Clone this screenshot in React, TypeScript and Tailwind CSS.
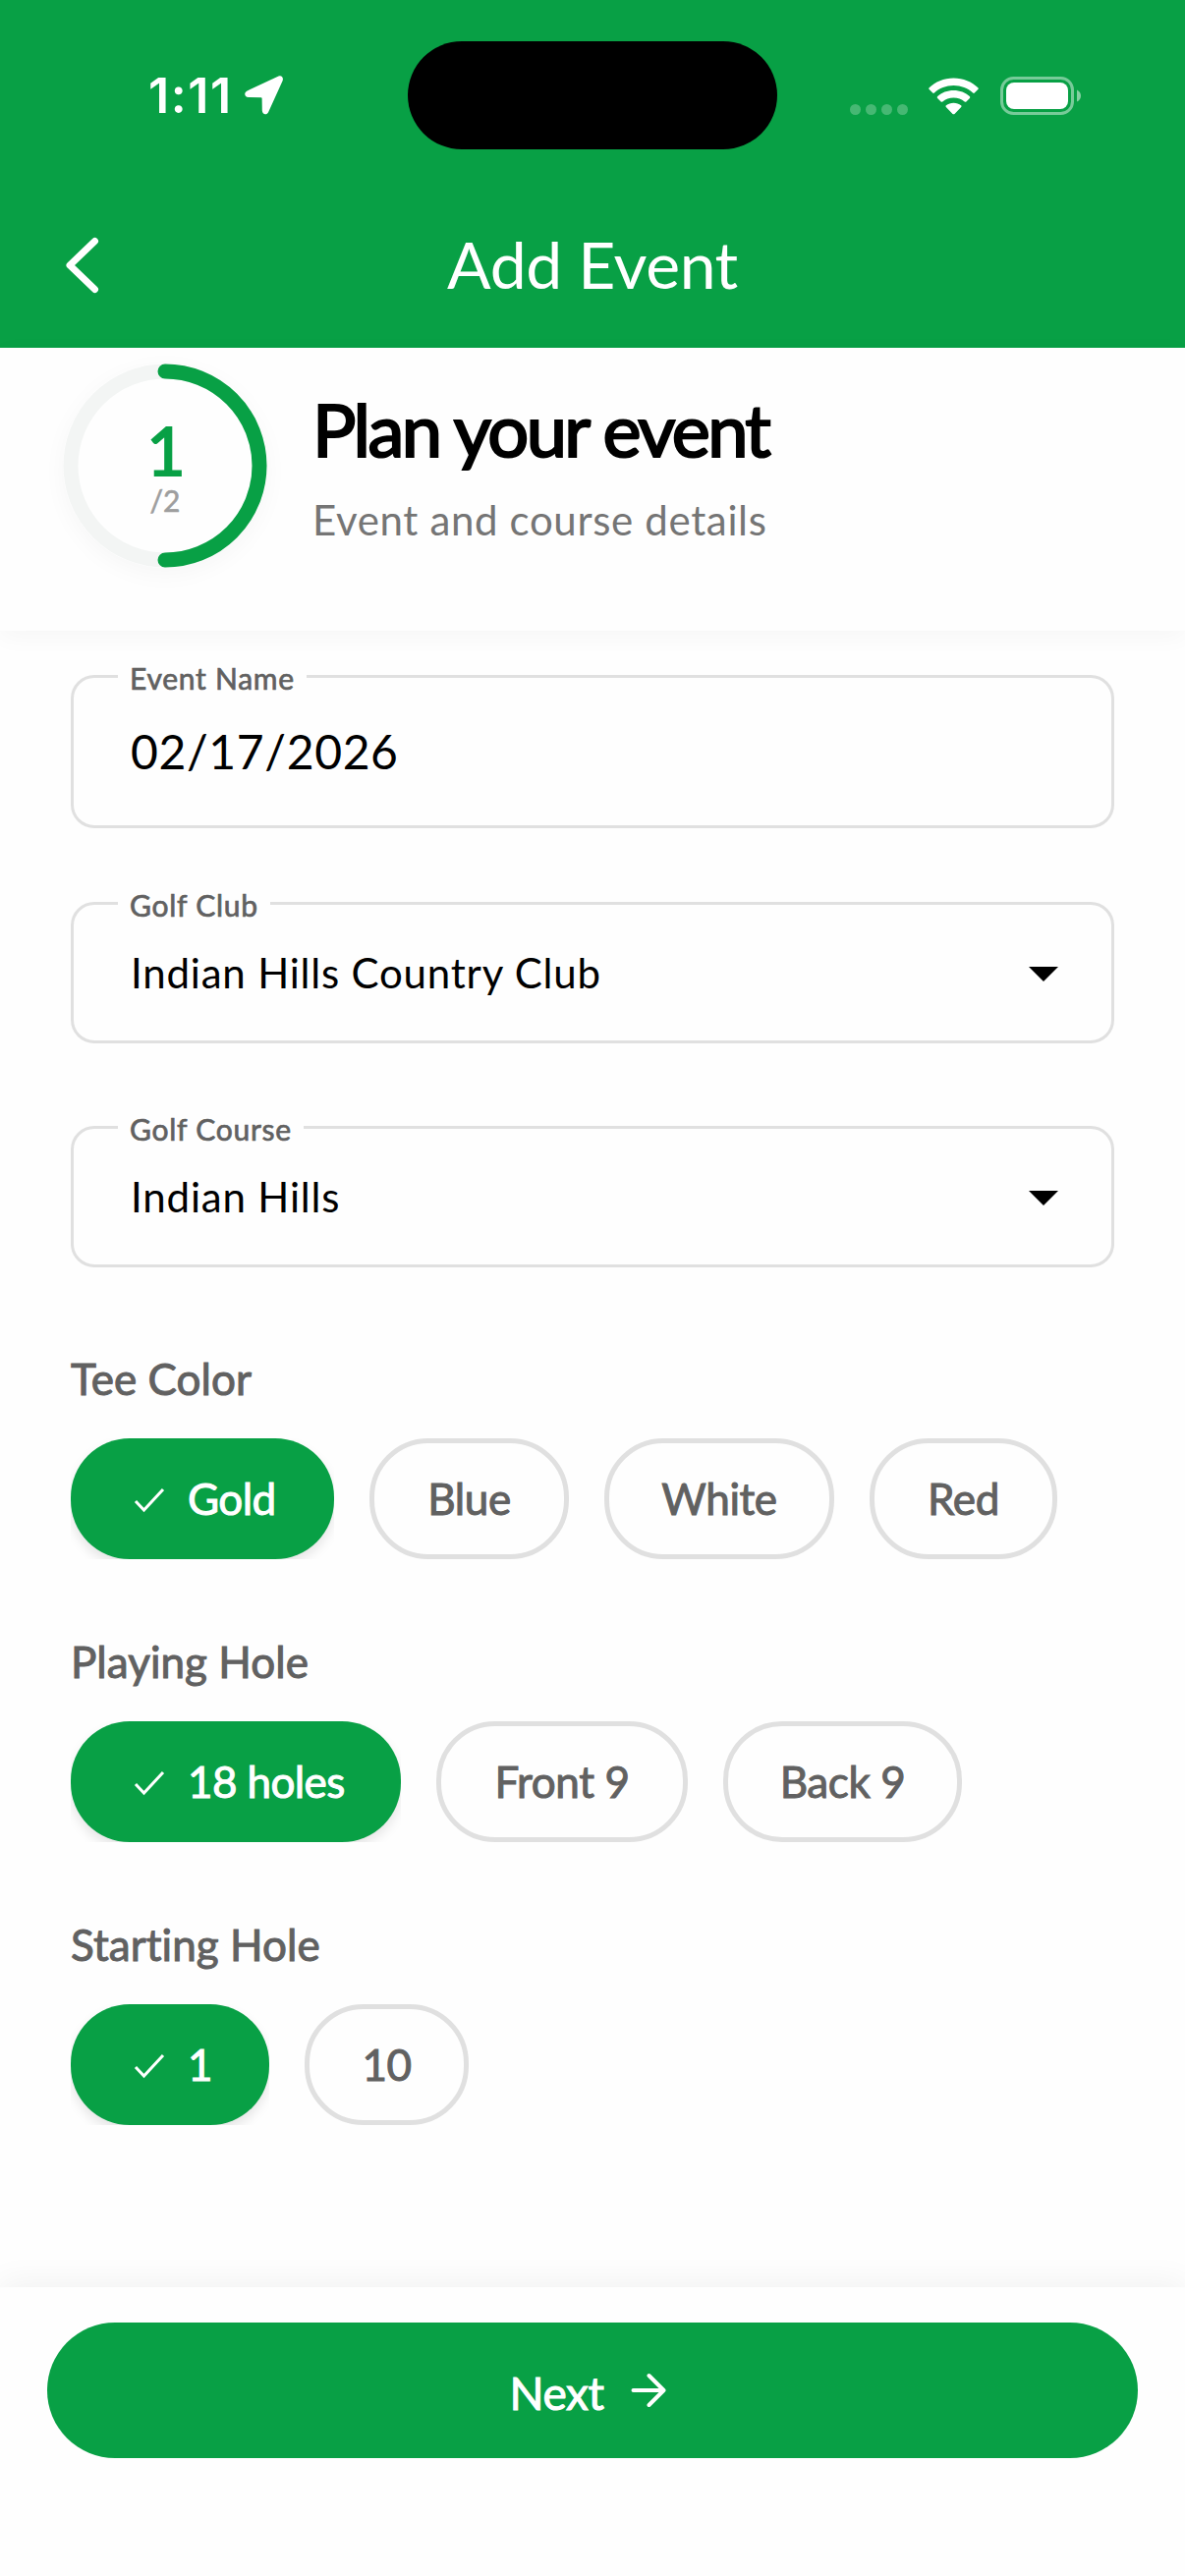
import React from 'react';

interface FieldProps {
  label: string;
  value: string;
  className: string;
  valueClass: string;
  dropdown?: boolean;
}

interface Chip {
  label: string;
  width: string;
}

interface ChipGroupProps {
  title: string;
  chips: Chip[];
}

const groups: ChipGroupProps[] = [
  {
    title: 'Tee Color',
    chips: [
      { label: 'Gold', width: 'w-[268px]' },
      { label: 'Blue', width: 'w-[203px]' },
      { label: 'White', width: 'w-[234px]' },
      { label: 'Red', width: 'w-[191px]' },
    ],
  },
  {
    title: 'Playing Hole',
    chips: [
      { label: '18 holes', width: 'w-[336px]' },
      { label: 'Front 9', width: 'w-[256px]' },
      { label: 'Back 9', width: 'w-[243px]' },
    ],
  },
  {
    title: 'Starting Hole',
    chips: [
      { label: '1', width: 'w-[202px]' },
      { label: '10', width: 'w-[167px]' },
    ],
  },
];

const StatusBar = () => (
  <div className="relative flex h-[194px] items-center justify-between pl-[151px] pr-[106px]">
    <div className="flex items-center">
      <span className="w-[98px] font-['Inter'] text-[50px] font-semibold leading-[60px] tracking-[1.6px] text-white">1:11</span>
      <svg className="h-[40px] w-[40px]" viewBox="0 0 40 40" fill="#fff">
        <path d="M34.5 0.6 L2.6 15.4 C-1.2 17.4 -0.2 22 3.8 22 L16.6 22.2 Q17.6 22.2 17.6 23.2 L17.8 35.6 C17.9 39.8 22.6 40.6 24.2 37 L38.6 5.2 C39.8 2 37.6 -0.7 34.5 0.6 Z" />
      </svg>
    </div>
    {/* Dynamic Island */}
    <div className="absolute left-[415px] top-[42px] h-[110px] w-[376px] rounded-full bg-black" />
    <div className="flex items-center">
      <div className="mt-[28px] flex gap-[5px]">
        {[0, 1, 2, 3].map((i) => (
          <span key={i} className="h-[11px] w-[11px] rounded-full bg-white/25" />
        ))}
      </div>
      <svg className="ml-[21px] mt-[2px] h-[38px] w-[51px]" viewBox="0 0 51 38" fill="#fff">
        <path d="M25.5 0.5 C35.4 0.5 44.2 4.3 50.3 10.3 Q51.2 11.2 50.3 12.1 L46.8 15.6 Q46 16.3 45.1 15.5 C40 10.8 33.1 8 25.5 8 C17.9 8 11 10.8 5.9 15.5 Q5 16.3 4.2 15.6 L0.7 12.1 Q-0.2 11.2 0.7 10.3 C6.8 4.3 15.6 0.5 25.5 0.5 Z" />
        <path d="M25.5 13 C31.9 13 37.6 15.3 41.8 19.1 Q42.8 20 41.9 20.9 L38.4 24.4 Q37.6 25.2 36.7 24.4 C33.7 21.8 29.8 20.4 25.5 20.4 C21.2 20.4 17.3 21.8 14.3 24.4 Q13.4 25.2 12.6 24.4 L9.1 20.9 Q8.2 20 9.2 19.1 C13.4 15.3 19.1 13 25.5 13 Z" />
        <path d="M25.5 25.7 C28.4 25.7 31 26.7 33.1 28.3 Q34.1 29.1 33.2 30 L26.5 36.9 Q25.5 37.8 24.5 36.9 L17.8 30 Q16.9 29.1 17.9 28.3 C20 26.7 22.6 25.7 25.5 25.7 Z" />
      </svg>
      <svg className="ml-[22px] h-[39px] w-[82px]" viewBox="0 0 82 39">
        <rect x="1.5" y="1.5" width="72" height="36" rx="12" fill="none" stroke="#fff" strokeOpacity="0.45" strokeWidth="3" />
        <rect x="6" y="6" width="63" height="27" rx="8" fill="#fff" />
        <path d="M78 13.5 Q82 15.5 82 19.5 Q82 23.5 78 25.5 Z" fill="#fff" fillOpacity="0.5" />
      </svg>
    </div>
  </div>
);

const ProgressRing = () => (
  <div className="relative mt-4 h-[208px] w-[208px] shrink-0 rounded-full bg-[#fefefe] shadow-[0_6px_24px_rgba(0,0,0,0.035)]">
    <svg className="h-[208px] w-[208px]" viewBox="0 0 208 208" fill="none" strokeWidth="15">
      <circle cx="104" cy="104" r="96" stroke="#f3f5f4" />
      <path d="M104 8 A96 96 0 0 1 104 200" stroke="#08a045" strokeLinecap="round" />
    </svg>
    <div className="absolute inset-0 flex flex-col items-center pt-[58px]">
      <span className="ml-[2px] text-[68px] leading-[60px] text-[#08a045] [-webkit-text-stroke:2px_#08a045]">1</span>
      <span className="mt-[3px] text-[30px] leading-[36px] text-[#9e9e9e] [-webkit-text-stroke:0.6px_#9e9e9e]">/2</span>
    </div>
  </div>
);

const Field: React.FC<FieldProps> = ({ label, value, className, valueClass, dropdown }) => (
  <div className={`relative flex items-center justify-between rounded-[24px] border-[3px] border-[#e0e0e0] pl-[58px] pr-[54px] ${className}`}>
    <span className="absolute left-[45px] top-[-18px] bg-[#fefefe] px-3 text-[30px] leading-[36px] tracking-[0.75px] text-[#616161] [-webkit-text-stroke:0.7px_#616161]">{label}</span>
    <span className={`text-black ${valueClass}`}>{value}</span>
    {dropdown && (
      <svg className="mt-[2px] h-[15px] w-[30px]" viewBox="0 0 30 15">
        <path d="M0 0 H30 L15 15 Z" fill="#000" />
      </svg>
    )}
  </div>
);

const ChipGroup: React.FC<ChipGroupProps> = ({ title, chips }) => (
  <div>
    <h2 className="text-[44px] leading-[54px] tracking-[0.05px] text-[#616161] [-webkit-text-stroke:1px_#616161]">{title}</h2>
    <div className="mt-[34px] flex gap-9">
      {chips.map((chip, i) =>
        i === 0 ? (
          <div key={chip.label} className={`h-[123px] overflow-hidden ${chip.width}`}>
            <button className="flex h-full w-full items-center rounded-[60px] bg-[#08a045] pb-[2px] pl-[64px] text-[44px] tracking-[-0.6px] text-white shadow-[0_6px_12px_rgba(0,0,0,0.1)] [-webkit-text-stroke:1px_#fff]">
              <svg className="mt-[4px] h-[28px] w-[32px]" viewBox="0 0 32 28" fill="none" stroke="#fff" strokeWidth="3">
                <path d="M2 15 L10.5 24 L30 3" />
              </svg>
              <span className="ml-[23px] whitespace-nowrap">{chip.label}</span>
            </button>
          </div>
        ) : (
          <button
            key={chip.label}
            className={`flex h-[123px] items-center justify-center rounded-[60px] border-[5px] border-[#e0e0e0] pb-[2px] text-[44px] tracking-[-0.4px] text-[#616161] [-webkit-text-stroke:1px_#616161] ${chip.width}`}
          >
            {chip.label}
          </button>
        )
      )}
    </div>
  </div>
);

const App = () => (
  <div className="flex h-[2622px] w-[1206px] flex-col overflow-hidden bg-[#fefefe] font-['Lato',sans-serif]">
    <header className="h-[354px] shrink-0 bg-[#08a045]">
      <StatusBar />
      <div className="relative flex h-[150px] items-center justify-center">
        <svg className="absolute left-[66px] top-[47px] h-[58px] w-[36px]" viewBox="0 0 36 58" fill="none" stroke="#fff" strokeWidth="7" strokeLinecap="round" strokeLinejoin="round">
          <path d="M30.5 4.5 L5 29 L30.5 53.5" />
        </svg>
        <h1 className="text-[66px] leading-[80px] tracking-[-0.4px] text-white">Add Event</h1>
      </div>
    </header>

    <section className="flex h-[288px] shrink-0 bg-[#fefefe] pl-[64px] shadow-[0_6px_24px_rgba(0,0,0,0.035)]">
      <ProgressRing />
      <div className="ml-[46px] mt-[38px]">
        <p className="text-[74px] leading-[90px] tracking-[-2.6px] text-black [-webkit-text-stroke:2.2px_#000]">Plan your event</p>
        <p className="mt-[22px] text-[42px] leading-[50px] tracking-[0.65px] text-[#757575]">Event and course details</p>
      </div>
    </section>

    <main className="flex grow flex-col px-[72px] pt-[45px]">
      <Field label="Event Name" value="02/17/2026" className="h-[156px]" valueClass="text-[48px] tracking-[0.65px]" />
      <Field label="Golf Club" value="Indian Hills Country Club" className="mt-[75px] h-[144px]" valueClass="text-[42px] tracking-[0.8px]" dropdown />
      <Field label="Golf Course" value="Indian Hills" className="mt-[84px] h-[144px]" valueClass="text-[42px] tracking-[0.83px]" dropdown />
      <div className="mt-[86px] flex flex-col gap-[77px]">
        {groups.map((group) => (
          <ChipGroup key={group.title} {...group} />
        ))}
      </div>
    </main>

    <footer className="h-[294px] shrink-0 bg-[#fefefe] px-12 pt-9 shadow-[0_-6px_30px_rgba(0,0,0,0.05)]">
      <button className="flex h-[138px] w-full items-center justify-center rounded-full bg-[#08a045] text-[46px] tracking-[-0.4px] text-white [-webkit-text-stroke:1px_#fff]">
        <span className="mt-[5px]">Next</span>
        <svg className="ml-[27px] mr-[10px] h-[36px] w-[36px]" viewBox="0 0 36 36" fill="none" stroke="#fff" strokeWidth="4" strokeLinecap="round" strokeLinejoin="round">
          <path d="M2.5 18 H33 M18.5 3 L33.5 18 L18.5 33" />
        </svg>
      </button>
    </footer>
  </div>
);

export default App;
